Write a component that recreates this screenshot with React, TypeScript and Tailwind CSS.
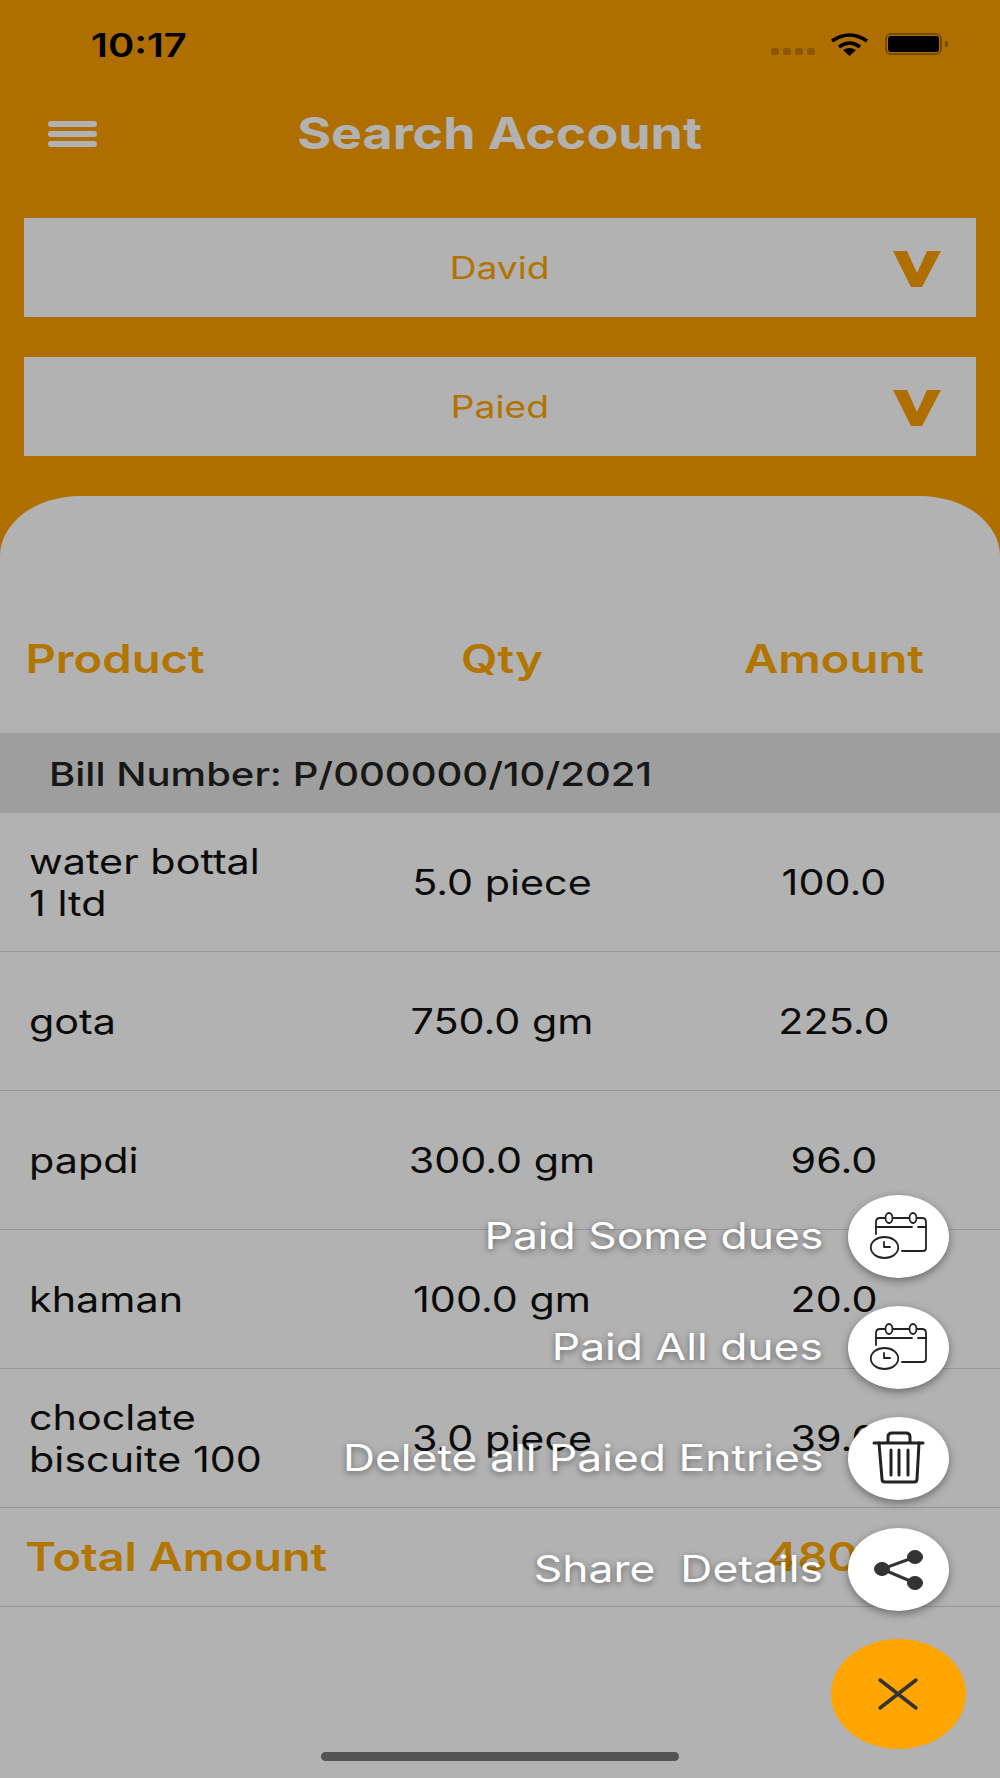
import { type FC } from "react";

const rows = [
	{ name: ["water bottal", "1 ltd"], qty: "5.0 piece", amount: "100.0" },
	{ name: ["gota"], qty: "750.0 gm", amount: "225.0" },
	{ name: ["papdi"], qty: "300.0 gm", amount: "96.0" },
	{ name: ["khaman"], qty: "100.0 gm", amount: "20.0" },
	{ name: ["choclate", "biscuite 100"], qty: "3.0 piece", amount: "39.0" },
];

const CalendarIcon: FC = () => (
	<svg viewBox="0 0 101 83" className="w-full h-full" fill="none" stroke="#222" strokeWidth={1.8} strokeLinecap="round" strokeLinejoin="round">
		<path d="M28 39V27q0-4 4-4h5M45 23h16M69 23h5q4 0 4 4v26q0 3-3 3H54" />
		<ellipse cx={41} cy={23} rx={3.5} ry={5} />
		<ellipse cx={65} cy={23} rx={3.5} ry={5} />
		<path d="M28 32h36M70 32h8" />
		<ellipse cx={36.5} cy={52.5} rx={13.7} ry={10.5} />
		<path d="M36 47v5h6" />
	</svg>
);

const TrashIcon: FC = () => (
	<svg viewBox="0 0 101 83" className="w-full h-full" fill="none" stroke="#222" strokeWidth={3} strokeLinecap="round" strokeLinejoin="round">
		<path d="M26 26h49M40 26v-6q0-4 4-4h14q4 0 4 4v6" />
		<path d="M31 26l3 36q0 3 3 3h29q3 0 3-3l2-36" />
		<path d="M43 33v25M51 33v25M60 33v25" />
	</svg>
);

const ShareIcon: FC = () => (
	<svg viewBox="0 0 101 83" className="w-full h-full" fill="#333" stroke="#333">
		<path d="M67 29L34 41L67 55" fill="none" strokeWidth={3} />
		<ellipse cx={34} cy={41} rx={7.5} ry={6.5} />
		<ellipse cx={67} cy={29} rx={7.5} ry={6.5} />
		<ellipse cx={67} cy={55} rx={7.5} ry={6.5} />
	</svg>
);

const SelectBox: FC<{ label: string }> = ({ label }) => (
	<div className="relative h-[99px] bg-white flex items-center justify-center">
		<span className="inline-block scale-x-[1.2] text-[31px] leading-none text-[#ffa500]">
			{label}
		</span>
		<svg viewBox="0 0 48 36" className="absolute right-[35px] top-[33px] w-[48px] h-[36px]" fill="#fba000">
			<path d="M0 0H14L24 22L34 0H48L29 36H18Z" />
		</svg>
	</div>
);

const FabItem: FC<{ label: string; icon: React.ReactNode }> = ({ label, icon }) => (
	<div className="flex items-center justify-end gap-[25px]">
		<span className="inline-block origin-right scale-x-[1.2] whitespace-pre text-[37px] leading-none text-white mb-[2px] [text-shadow:0_2px_6px_rgba(0,0,0,0.45)]">
			{label}
		</span>
		<div className="w-[101px] h-[83px] rounded-[50%] bg-white shadow-[0_3px_8px_rgba(0,0,0,0.4)]">
			{icon}
		</div>
	</div>
);

export default function App() {
	return (
		<div className="relative w-[1000px] h-[1778px] overflow-hidden bg-[#fba000] font-[Inter,sans-serif]">
			{/* status bar */}
			<div className="flex items-center justify-between h-[90px] pl-[91px] pr-[52px]">
				<span className="inline-block origin-left scale-x-[1.21] text-[33px] font-semibold leading-none text-black">
					10:17
				</span>
				<div className="flex items-center gap-[16px]">
					<div className="flex gap-[4px] mt-[12px]">
						<div className="w-[8px] h-[7px] rounded-[2px] bg-[#c8800a]" />
						<div className="w-[8px] h-[7px] rounded-[2px] bg-[#c8800a]" />
						<div className="w-[8px] h-[7px] rounded-[2px] bg-[#c8800a]" />
						<div className="w-[8px] h-[7px] rounded-[2px] bg-[#c8800a]" />
					</div>
					<svg viewBox="0 0 37 23" className="w-[37px] h-[23px] mb-[1px]" fill="none" stroke="#000" strokeWidth={3.6}>
						<path d="M1 8Q18.5 -4 36 8" />
						<path d="M8 14Q18.5 6 29 14" />
						<path d="M18.5 23L12 17Q18.5 13 25 17Z" fill="#000" stroke="none" />
					</svg>
					<div className="flex items-center gap-[3px] ml-[1px] mb-[2px]">
						<div className="w-[57px] h-[22px] rounded-[6px] border-2 border-[#a86c00] p-[1px]">
							<div className="w-full h-full rounded-[3px] bg-black" />
						</div>
						<div className="w-[3px] h-[6px] rounded-r-[3px] bg-[#9a6200]" />
					</div>
				</div>
			</div>

			{/* title bar */}
			<div className="relative flex items-center justify-center h-[86px]">
				<div className="absolute left-[48px] top-[31px] flex flex-col gap-[4px]">
					<div className="w-[49px] h-[6px] rounded-full bg-white" />
					<div className="w-[49px] h-[6px] rounded-full bg-white" />
					<div className="w-[49px] h-[6px] rounded-full bg-white" />
				</div>
				<span className="inline-block scale-x-[1.18] text-[44px] font-bold leading-none text-white">
					Search Account
				</span>
			</div>

			{/* dropdowns */}
			<div className="flex flex-col gap-[40px] px-[24px] pt-[42px]">
				<SelectBox label="David" />
				<SelectBox label="Paied" />
			</div>

			{/* sheet */}
			<div className="mt-[40px] h-[1282px] rounded-tl-[80px_60px] rounded-tr-[80px_60px] bg-white">
				<div className="grid grid-cols-[342px_320px_344px] items-center h-[237px] pt-[88px] text-[39px] font-semibold text-[#ffa800]">
					<span className="inline-block origin-left scale-x-[1.21] pl-[21px] leading-none">Product</span>
					<span className="inline-block scale-x-[1.21] text-center leading-none">Qty</span>
					<span className="inline-block scale-x-[1.21] text-center leading-none">Amount</span>
				</div>
				<div className="flex items-center h-[80px] bg-[#e3e3e3] pl-[49px] pt-[3px]">
					<span className="inline-block origin-left scale-x-[1.213] text-[33px] font-medium leading-none text-[#222]">
						Bill Number: P/000000/10/2021
					</span>
				</div>
				{rows.map((row) => (
					<div key={row.qty} className="grid grid-cols-[342px_320px_344px] items-center h-[139px] border-b border-[#d9d9d9] text-[35px] text-[#111]">
						<div className="pl-[29px] leading-[42px]">
							{row.name.map((line) => (
								<div key={line} className="origin-left scale-x-[1.18] whitespace-nowrap">{line}</div>
							))}
						</div>
						<span className="inline-block scale-x-[1.18] text-center leading-none">{row.qty}</span>
						<span className="inline-block scale-x-[1.18] text-center leading-none">{row.amount}</span>
					</div>
				))}
				<div className="grid grid-cols-[662px_344px] items-center h-[99px] pb-[2px] border-b border-[#d9d9d9] text-[39px] font-semibold text-[#ffa800]">
					<span className="inline-block origin-left scale-x-[1.2] pl-[21px] leading-none">Total Amount</span>
					<span className="inline-block scale-x-[1.2] text-center leading-none">480.0</span>
				</div>
			</div>

			{/* home indicator */}
			<div className="absolute left-[321px] bottom-[17px] w-[358px] h-[9px] rounded-full bg-[#777]" />

			{/* dim layer with open fab menu */}
			<div className="absolute inset-0 flex flex-col items-end justify-end bg-black/30 pb-[29px]">
				<div className="flex flex-col gap-[28px] mr-[51px]">
					<FabItem label="Paid Some dues" icon={<CalendarIcon />} />
					<FabItem label="Paid All dues" icon={<CalendarIcon />} />
					<FabItem label="Delete all Paied Entries" icon={<TrashIcon />} />
					<FabItem label="Share  Details" icon={<ShareIcon />} />
				</div>
				<div className="mt-[28px] mr-[34px] w-[135px] h-[110px] rounded-[50%] bg-[#ffa500]">
					<svg viewBox="0 0 135 110" className="w-full h-full" fill="none" stroke="#333" strokeWidth={3.5} strokeLinecap="round">
						<path d="M49 41L85 69M85 41L49 69" />
					</svg>
				</div>
			</div>
		</div>
	);
}
